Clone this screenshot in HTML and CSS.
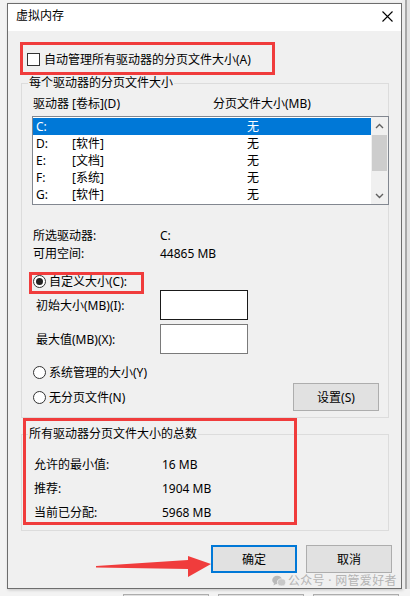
FILE: index.html
```html
<!DOCTYPE html>
<html lang="zh-CN">
<head>
    <meta charset="UTF-8">
    <meta name="viewport" content="width=device-width, initial-scale=1.0">
    <title>虚拟内存</title>
    <link rel="stylesheet" href="styles.css">
</head>
<body>
    <div class="desk">
        <div class="dialog">
            <div class="titlebar">
                <span class="title">虚拟内存</span>
                <svg class="close" width="11" height="11" viewBox="0 0 11 11">
                    <path d="M0.5 0.5 L10.5 10.5 M10.5 0.5 L0.5 10.5" stroke="#000" stroke-width="1.1" fill="none"/>
                </svg>
            </div>

            <div class="dlg-body">
                <div class="check-row"><span class="checkbox"></span>自动管理所有驱动器的分页文件大小(A)</div>

                <!-- per-drive settings -->
                <div class="group">
                    <div class="group-title">每个驱动器的分页文件大小</div>
                    <div class="list-head">
                        <span class="col-drive">驱动器 [卷标](D)</span>
                        <span>分页文件大小(MB)</span>
                    </div>
                    <div class="listbox">
                        <div class="rows">
                            <div class="row selected"><span>C:</span><span></span><span>无</span></div>
                            <div class="row"><span>D:</span><span>[软件]</span><span>无</span></div>
                            <div class="row"><span>E:</span><span>[文档]</span><span>无</span></div>
                            <div class="row"><span>F:</span><span>[系统]</span><span>无</span></div>
                            <div class="row"><span>G:</span><span>[软件]</span><span>无</span></div>
                        </div>
                        <div class="vscroll">
                            <div class="arrow">
                                <svg width="9" height="6" viewBox="0 0 9 6"><path d="M1 5 L4.5 1.5 L8 5" stroke="#606060" stroke-width="1.4" fill="none"/></svg>
                            </div>
                            <div class="thumb"></div>
                            <div class="track"></div>
                            <div class="arrow">
                                <svg width="9" height="6" viewBox="0 0 9 6"><path d="M1 1 L4.5 4.5 L8 1" stroke="#606060" stroke-width="1.4" fill="none"/></svg>
                            </div>
                        </div>
                    </div>

                    <div class="info">
                        <div class="info-row"><span class="info-label">所选驱动器:</span><span>C:</span></div>
                        <div class="info-row"><span class="info-label">可用空间:</span><span>44865 MB</span></div>
                    </div>

                    <div class="radio-row first"><span class="radio checked"></span>自定义大小(C):</div>
                    <div class="size-row"><span class="size-label">初始大小(MB)(I):</span><span class="textbox active"></span></div>
                    <div class="size-row second"><span class="size-label">最大值(MB)(X):</span><span class="textbox"></span></div>
                    <div class="radio-row system"><span class="radio"></span>系统管理的大小(Y)</div>
                    <div class="radio-row none">
                        <span class="radio"></span>无分页文件(N)
                        <button class="btn set-btn">设置(S)</button>
                    </div>
                </div>

                <!-- totals for all drives -->
                <div class="group totals">
                    <div class="group-title">所有驱动器分页文件大小的总数</div>
                    <div class="total-rows">
                        <div class="total-row"><span class="total-label">允许的最小值:</span><span>16 MB</span></div>
                        <div class="total-row"><span class="total-label">推荐:</span><span>1904 MB</span></div>
                        <div class="total-row"><span class="total-label">当前已分配:</span><span>5968 MB</span></div>
                    </div>
                </div>

                <div class="actions">
                    <button class="btn default">确定</button>
                    <button class="btn">取消</button>
                </div>
            </div>
        </div>
        <div class="side"></div>
    </div>

    <div class="back-buttons">
        <span></span><span></span><span></span>
    </div>

    <!-- red markers -->
    <div class="mark mark-auto"></div>
    <div class="mark mark-custom"></div>
    <div class="mark mark-totals"></div>
    <svg class="mark-arrow" width="125" height="30" viewBox="0 0 125 30">
        <polygon points="6,16 98,10 98,6 121,14 98,27 98,19 6,17.5" fill="#f03c3c"/>
    </svg>

    <div class="watermark">
        <svg width="14" height="12" viewBox="0 0 14 12">
            <ellipse cx="5.2" cy="5" rx="5" ry="4.3" fill="#b9b9b9"/>
            <path d="M2 8 L1.5 10.5 L4.5 8.8 Z" fill="#b9b9b9"/>
            <ellipse cx="9.6" cy="7.4" rx="4.2" ry="3.6" fill="#c8c8c8" stroke="#f3f3f3" stroke-width="0.8"/>
        </svg>
        <span>公众号 · 网管爱好者</span>
    </div>
</body>
</html>
```

FILE: styles.css
```css
html, body {
    margin: 0;
}
body {
    width: 410px;
    height: 596px;
    overflow: hidden;
    position: relative;
    background-color: #f3f3f3;
    font-family: "Noto Sans", "Noto Sans CJK SC", sans-serif;
    font-size: 12px;
    color: #000;
}
.desk {
    display: flex;
    padding: 3px 0 0 7px;
}
.dialog {
    width: 396px;
    height: 586px;
    box-sizing: border-box;
    border: 1px solid #6d6d6d;
    background-color: #f0f0f0;
    display: flex;
    flex-direction: column;
    box-shadow: 1px 1px 3px rgba(0, 0, 0, 0.2);
}
.side {
    width: 8px;
    margin-top: -3px;
    background: linear-gradient(to right, #ececec 0 3px, #a8a8a8 3px 5px, #e2e2e2 5px);
}
.titlebar {
    height: 27px;
    box-sizing: border-box;
    padding: 0 8px 3px 8px;
    background-color: #fff;
    display: flex;
    align-items: center;
}
.title {
    line-height: 16px;
}
.close {
    margin-left: auto;
}
.dlg-body {
    padding: 0 9px 0 13px;
}
.check-row {
    display: flex;
    align-items: center;
    height: 14px;
    margin: 21px 0 0 6px;
}
.checkbox {
    width: 13px;
    height: 13px;
    box-sizing: border-box;
    border: 1px solid #333;
    background-color: #fff;
    margin-right: 4px;
}
.group {
    margin: 17px 3px 0 0;
    border: 1px solid #dcdcdc;
    padding-bottom: 6px;
}
.group-title {
    width: max-content;
    margin: -8px 0 0 6px;
    padding: 0 1px;
    line-height: 14px;
    background-color: #f0f0f0;
}
.list-head {
    display: flex;
    margin-top: 7px;
    padding-left: 11px;
    line-height: 14px;
}
.col-drive {
    width: 180px;
}
.listbox {
    display: flex;
    height: 89px;
    box-sizing: border-box;
    margin: 5px -1px 0 10px;
    border: 1px solid #828790;
    background-color: #fff;
}
.rows {
    flex: 1;
    padding-top: 1px;
}
.row {
    display: grid;
    grid-template-columns: 36px 175px 1fr;
    height: 17px;
    line-height: 17px;
    padding-left: 3px;
}
.row.selected {
    background-color: #0078d7;
    color: #fff;
}
.vscroll {
    width: 17px;
    background-color: #f0f0f0;
    display: flex;
    flex-direction: column;
}
.arrow {
    height: 17px;
    display: flex;
    align-items: center;
    justify-content: center;
}
.thumb {
    height: 36px;
    margin: 1px 1px 0 1px;
    background-color: #cdcdcd;
}
.track {
    flex: 1;
}
.info {
    margin-top: 22px;
    padding-left: 11px;
}
.info-row {
    display: flex;
    line-height: 18px;
}
.info-label {
    width: 127px;
}
.radio-row {
    display: flex;
    align-items: center;
    height: 18px;
    padding-left: 11px;
}
.radio-row.first {
    margin-top: 9px;
}
.radio-row.system {
    margin-top: 9px;
}
.radio-row.none {
    height: 28px;
    margin-top: 2px;
}
.radio {
    width: 13px;
    height: 13px;
    box-sizing: border-box;
    border: 1px solid #333;
    border-radius: 50%;
    background-color: #fff;
    margin-right: 3px;
    display: flex;
    align-items: center;
    justify-content: center;
}
.radio.checked::after {
    content: "";
    width: 7px;
    height: 7px;
    border-radius: 50%;
    background-color: #222;
}
.size-row {
    display: flex;
    align-items: center;
    height: 30px;
    padding-left: 14px;
}
.size-row.second {
    margin-top: 4px;
}
.size-label {
    width: 124px;
}
.textbox {
    width: 88px;
    height: 30px;
    box-sizing: border-box;
    border: 1px solid #7a7a7a;
    background-color: #fff;
}
.textbox.active {
    border-color: #1a1a1a;
}
.btn {
    width: 86px;
    height: 28px;
    box-sizing: border-box;
    border: 1px solid #adadad;
    background-color: #e1e1e1;
    font-family: inherit;
    font-size: 12px;
    color: #000;
    padding: 0;
}
.set-btn {
    margin: 0 9px 0 auto;
}
.totals {
    margin-top: 16px;
}
.total-rows {
    margin-top: 11px;
    padding-left: 12px;
}
.total-row {
    display: flex;
    align-items: center;
    height: 24px;
}
.total-label {
    width: 128px;
}
.actions {
    display: flex;
    justify-content: flex-end;
    gap: 9px;
    margin-top: 14px;
}
.btn.default {
    border: 2px solid #0078d7;
}
.back-buttons {
    display: flex;
    gap: 9px;
    padding-left: 123px;
    margin-top: 5px;
}
.back-buttons span {
    width: 86px;
    height: 24px;
    box-sizing: border-box;
    border: 1px solid #adadad;
    background-color: #e1e1e1;
}
.mark {
    position: absolute;
    box-sizing: border-box;
    border: 3px solid #f03c3c;
}
.mark-auto {
    left: 20px;
    top: 42px;
    width: 255px;
    height: 33px;
}
.mark-custom {
    left: 29px;
    top: 272px;
    width: 115px;
    height: 22px;
}
.mark-totals {
    left: 23px;
    top: 418px;
    width: 274px;
    height: 107px;
}
.mark-arrow {
    position: absolute;
    left: 90px;
    top: 550px;
}
.watermark {
    position: absolute;
    left: 272px;
    top: 573px;
    display: flex;
    align-items: center;
    gap: 2px;
    color: #b4b4b4;
    font-size: 12px;
    line-height: 16px;
    letter-spacing: 0.3px;
}
```
